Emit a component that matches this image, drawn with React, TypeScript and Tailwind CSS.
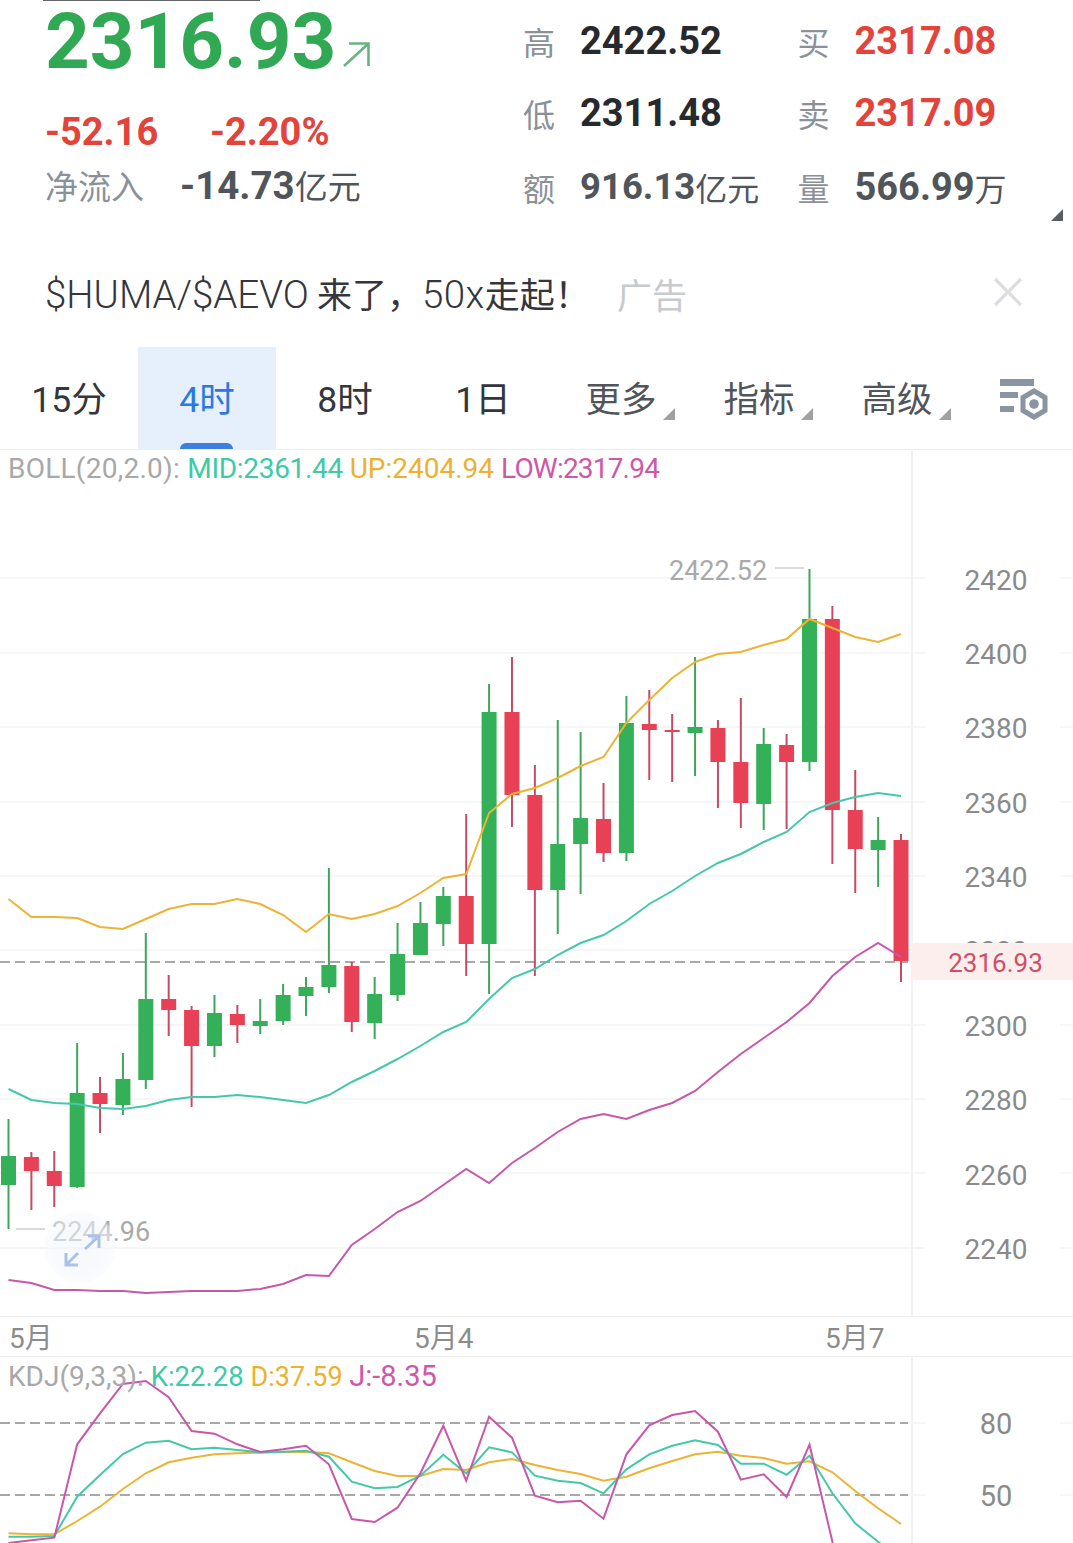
import React from "react";

const X0 = 8.5;
const STEP = 22.885;
const xi = (i: number) => X0 + STEP * i;

// [wickTop, bodyTop, bodyBottom, wickBottom, isGreen]
const candles: [number, number, number, number, boolean][] = [
  [1119, 1156, 1185, 1229, true],
  [1152, 1157, 1171, 1210, false],
  [1151, 1171, 1186, 1207, false],
  [1043, 1093, 1187, 1188, true],
  [1077, 1093, 1104, 1133, false],
  [1053, 1079, 1105, 1115, true],
  [933, 999, 1080, 1089, true],
  [975, 999, 1010, 1036, false],
  [1006, 1010, 1046, 1107, false],
  [995, 1013, 1046, 1057, true],
  [1005, 1014, 1025, 1043, false],
  [999, 1021, 1026, 1034, true],
  [984, 995, 1021, 1025, true],
  [977, 987, 996, 1016, true],
  [868, 965, 987, 993, true],
  [962, 966, 1022, 1032, false],
  [977, 994, 1023, 1039, true],
  [923, 954, 995, 1001, true],
  [902, 923, 955, 955, true],
  [887, 896, 924, 946, true],
  [814, 896, 944, 976, false],
  [684, 712, 944, 994, true],
  [657, 712, 795, 827, false],
  [765, 795, 890, 976, false],
  [720, 844, 890, 934, true],
  [732, 818, 844, 894, true],
  [783, 819, 853, 862, false],
  [696, 723, 853, 861, true],
  [690, 724, 730, 780, false],
  [714, 730, 732, 782, false],
  [657, 727, 733, 776, true],
  [720, 728, 762, 808, false],
  [698, 762, 803, 828, false],
  [728, 744, 804, 830, true],
  [734, 745, 762, 829, false],
  [569, 619, 762, 771, true],
  [606, 619, 810, 864, false],
  [770, 810, 849, 893, false],
  [817, 840, 850, 887, true],
  [834, 840, 961, 982, false],
];

const up = [899, 917, 917, 918, 927, 929, 919, 909, 904, 904, 899, 904, 915, 932, 914, 919, 914, 906, 893, 878, 874, 813, 794, 788, 778, 766, 757, 723, 700, 678, 662, 654, 652, 645, 639, 619, 628, 637, 642, 634];
const mid = [1089, 1100, 1103, 1104, 1108, 1109, 1106, 1100, 1097, 1097, 1095, 1097, 1100, 1103, 1095, 1082, 1071, 1059, 1046, 1032, 1022, 999, 978, 969, 955, 943, 935, 921, 904, 891, 876, 863, 854, 842, 832, 812, 803, 797, 793, 796];
const low = [1280, 1283, 1290, 1290, 1291, 1291, 1293, 1292, 1291, 1291, 1291, 1289, 1284, 1275, 1276, 1245, 1229, 1212, 1201, 1185, 1169, 1183, 1163, 1148, 1132, 1119, 1114, 1119, 1110, 1103, 1091, 1072, 1054, 1038, 1022, 1003, 976, 957, 943, 957];

const kv = [680, 680, 678, 560, 495, 432, 398, 392, 418, 413, 420, 427, 425, 422, 440, 515, 535, 531, 497, 434, 490, 412, 427, 497, 512, 519, 550, 478, 433, 407, 391, 405, 461, 461, 494, 437, 550, 640, 695, 750];
const dv = [670, 673, 673, 633, 590, 537, 490, 457, 443, 433, 430, 428, 426, 425, 430, 457, 483, 498, 498, 477, 480, 457, 447, 465, 480, 492, 512, 500, 475, 453, 433, 425, 437, 444, 461, 454, 487, 543, 595, 642];
const jv = [699, 691, 683, 403, 310, 222, 213, 262, 363, 371, 403, 426, 418, 407, 463, 627, 636, 593, 490, 347, 512, 320, 383, 557, 577, 572, 626, 433, 346, 315, 303, 365, 509, 493, 561, 404, 695, 900, 900, 900];

const line = (ys: number[]) => ys.map((y, i) => `${xi(i).toFixed(1)},${y}`).join(" ");
const kline = (vs: number[]) => vs.map((v, i) => `${xi(i).toFixed(1)},${(1310 + v / 3).toFixed(1)}`).join(" ");

const gridYs = [578, 653, 727, 802, 876, 950, 1025, 1099, 1173, 1248];
const axis = ["2420", "2400", "2380", "2360", "2340", "2320", "2300", "2280", "2260", "2240"];

const GREEN = "#34b158";
const RED = "#e84155";
const TEAL = "#45c8a9";
const YELLOW = "#ecb335";
const PINK = "#c957a9";

function Corner({ color }: { color: string }) {
  return (
    <svg width="12" height="12" viewBox="0 0 12 12" className="block">
      <polygon points="12,0 12,12 0,12" fill={color} />
    </svg>
  );
}

function Stat({ label, value, color, unit, size, last }: { label: string; value: string; color: string; unit?: string; size: string; last?: boolean }) {
  return (
    <div className={`flex items-center h-[72px] ${last ? "mt-[2px]" : ""}`}>
      <span className="w-[57px] text-[32px] text-[#8b9199] font-['Noto_Sans_CJK_SC',sans-serif]">{label}</span>
      <span className={`font-bold font-['Roboto',sans-serif] ${size} ${color}`}>{value}</span>
      {unit && <span className="text-[32px] text-[#50555c] font-['Noto_Sans_CJK_SC',sans-serif]">{unit}</span>}
    </div>
  );
}

function Tab({ label, active, more, dark }: { label: string; active?: boolean; more?: boolean; dark?: boolean }) {
  return (
    <div className={`relative w-[138px] flex items-center justify-center pt-[5px] ${active ? "bg-[#e5f0fc]" : ""}`}>
      <span className={`text-[35.5px] font-['Roboto','Noto_Sans_CJK_SC',sans-serif] ${active ? "text-[#2b78de]" : dark ? "text-[#50555c]" : "text-[#33363b]"}`}>{label}</span>
      {more && (
        <span className="absolute right-[15px] top-[61px]">
          <Corner color="#a0a0a0" />
        </span>
      )}
      {active && <span className="absolute bottom-0 left-[42px] w-[53px] h-[6px] rounded-t-[6px] bg-[#3e80e0]" />}
    </div>
  );
}

export default function App() {
  return (
    <div className="relative w-[1073px] h-[1543px] overflow-hidden bg-white">
      {/* Header */}
      <div className="h-[240px]">
        <div className="ml-[43px] w-[217px] h-[1px] bg-[#666]" />
        <div className="flex pl-[45px]">
          <div className="w-[478px]">
            <div className="flex h-[82px] items-center">
              <span className="text-[78px] leading-[82px] font-bold text-[#31a853] font-['Roboto',sans-serif]">2316.93</span>
              <svg width="28" height="27" viewBox="0 0 28 27" className="ml-[7px] mt-[25px]">
                <path d="M1 25 L25.5 2.5 M6 2.5 H25.5 V25" fill="none" stroke="#68b380" strokeWidth="2.6" />
              </svg>
            </div>
            <div className="flex items-center h-[62px] mt-[18px] text-[38px] font-bold text-[#e2433a] font-['Roboto',sans-serif]">
              <span className="w-[165px]">-52.16</span>
              <span>-2.20%</span>
            </div>
            <div className="flex items-center h-[48px] -mt-[1px]">
              <span className="w-[135px] text-[33px] text-[#8b9199] font-['Noto_Sans_CJK_SC',sans-serif]">净流入</span>
              <span className="text-[38.5px] font-bold text-[#50555c] font-['Roboto',sans-serif]">-14.73</span>
              <span className="text-[33px] text-[#50555c] font-['Noto_Sans_CJK_SC',sans-serif]">亿元</span>
            </div>
          </div>
          <div className="relative grid grid-cols-[274.5px_auto] content-start mt-[4px]">
            <Stat label="高" value="2422.52" color="text-[#26292e]" size="text-[38px]" />
            <Stat label="买" value="2317.08" color="text-[#e2433a]" size="text-[38px]" />
            <Stat label="低" value="2311.48" color="text-[#26292e]" size="text-[38px]" />
            <Stat label="卖" value="2317.09" color="text-[#e2433a]" size="text-[38px]" />
            <Stat label="额" value="916.13" color="text-[#50555c]" unit="亿元" size="text-[36.5px]" last />
            <Stat label="量" value="566.99" color="text-[#50555c]" unit="万" size="text-[38px]" last />
            <span className="absolute left-[528px] top-[204px]">
              <Corner color="#5a5e63" />
            </span>
          </div>
        </div>
      </div>

      {/* Ad row */}
      <div className="h-[107px] flex items-center pl-[45px] pr-[49px]">
        <span className="pt-[3px] whitespace-nowrap text-[#33363b] font-['Roboto','Noto_Sans_CJK_SC',sans-serif]">
          <span className="text-[38.5px] font-light">$HUMA/$AEVO</span>
          <span className="ml-[8px] text-[35px]">来了，</span>
          <span className="text-[38.5px] font-light tracking-[0.5px]">50x</span>
          <span className="text-[35px]">走起！</span>
        </span>
        <span className="ml-[27px] pt-[2px] text-[35px] text-[#c8cbce] font-['Noto_Sans_CJK_SC',sans-serif]">广告</span>
        <svg width="32" height="32" viewBox="0 0 32 32" className="ml-auto -mt-[4px]">
          <path d="M3 3 L29 29 M29 3 L3 29" stroke="#dcdde0" strokeWidth="3.2" fill="none" />
        </svg>
      </div>

      {/* Tabs */}
      <div className="h-[103px] flex border-b border-[#eeeeee]">
        <Tab label="15分" />
        <Tab label="4时" active />
        <Tab label="8时" />
        <Tab label="1日" />
        <Tab label="更多" more dark />
        <Tab label="指标" more dark />
        <Tab label="高级" more dark />
        <div className="flex-1 flex items-center justify-end pr-[24px] pt-[4px]">
          <svg width="50" height="44" viewBox="0 0 50 44">
            <rect x="1" y="1" width="34" height="7" fill="#8a94a3" />
            <rect x="1" y="14" width="18" height="6" fill="#8a94a3" />
            <rect x="1" y="28" width="14" height="6" fill="#8a94a3" />
            <polygon points="35,13 46,19.5 46,32.5 35,39 24,32.5 24,19.5" fill="none" stroke="#8a94a3" strokeWidth="5" />
            <circle cx="35" cy="26" r="4.8" fill="#8a94a3" />
          </svg>
        </div>
      </div>

      {/* Main chart */}
      <div className="relative h-[867px] flex border-b border-[#eeeeee] overflow-hidden">
        <svg className="absolute left-0 top-0" width="1073" height="867" viewBox="0 450 1073 867">
          {gridYs.map((y) => (
            <g key={y}>
              <line x1="0" x2="925" y1={y} y2={y} stroke="#f3f3f3" strokeWidth="1.5" />
              <line x1="1060" x2="1073" y1={y} y2={y} stroke="#f5f5f5" strokeWidth="1.5" />
            </g>
          ))}
          <line x1="912" x2="912" y1="450" y2="1317" stroke="#f1f1f1" strokeWidth="2" />
          <line x1="0" x2="908" y1="962" y2="962" stroke="#a8a8a8" strokeWidth="2" strokeDasharray="10 5" />
          {candles.map(([wt, bt, bb, wb, g], i) => {
            const x = xi(i);
            return (
              <g key={i}>
                <line x1={x} x2={x} y1={wt} y2={wb} stroke={g ? "#3ea55c" : "#c54a64"} strokeWidth="2" />
                <rect x={x - 7.5} y={bt} width="15" height={Math.max(bb - bt, 2)} fill={g ? GREEN : RED} />
              </g>
            );
          })}
          <polyline points={line(up)} fill="none" stroke={YELLOW} strokeWidth="2" />
          <polyline points={line(mid)} fill="none" stroke={TEAL} strokeWidth="2" />
          <polyline points={line(low)} fill="none" stroke={PINK} strokeWidth="2" />
          <line x1="775" x2="804" y1="568" y2="568" stroke="#cfcfcf" strokeWidth="1.5" />
          <line x1="16" x2="45" y1="1229" y2="1229" stroke="#cfcfcf" strokeWidth="1.5" />
        </svg>

        {/* plot column */}
        <div className="relative w-[912px]">
          <div className="h-[36px] pl-[8px] text-[28px] leading-[37px] whitespace-nowrap font-['Roboto','Noto_Sans_CJK_SC',sans-serif]">
            <span className="text-[#a8a8a8] tracking-[0.25px]">BOLL(20,2.0): </span>
            <span className="text-[#40c9a5] tracking-[-0.3px]">MID:2361.44 </span>
            <span className="text-[#edb12f]">UP:2404.94 </span>
            <span className="text-[#cd57ab] tracking-[-0.8px]">LOW:2317.94</span>
          </div>
          <span className="absolute left-[669px] top-[103px] text-[27px] leading-[36px] text-[#a9a9a9] font-['Roboto',sans-serif]">2422.52</span>
          <span className="absolute left-[52px] top-[764px] text-[27px] leading-[36px] text-[#a9a9a9] font-['Roboto',sans-serif]">2244.96</span>
          <div className="absolute left-[44px] top-[761px] w-[72px] h-[72px] rounded-full bg-[radial-gradient(circle,#edf3fb90_0%,#f3f7fc90_55%,#ffffff00_100%)] flex items-center justify-center">
            <svg width="40" height="40" viewBox="0 0 40 40" className="overflow-visible">
              <path d="M25 22 L39 9 M28 9 H39 V21" fill="none" stroke="#a9c2ea" strokeWidth="3" />
              <path d="M6 38 L18 26 M6 26 V38 H18" fill="none" stroke="#a9c2ea" strokeWidth="3" />
            </svg>
          </div>
        </div>

        {/* axis column */}
        <div className="relative flex-1 flex flex-col items-center pt-[93.5px] pl-[7px]">
          {axis.map((a) => (
            <span key={a} className="h-[74.4px] leading-[74.4px] text-[28px] text-[#8a8a8a] font-['Roboto',sans-serif]">{a}</span>
          ))}
          <div className="absolute left-0 right-0 top-[493px] h-[37px] bg-[#fdeeee] flex items-center justify-center pt-[3px] pl-[6px]">
            <span className="text-[26px] text-[#cf4f66] font-['Roboto',sans-serif]">2316.93</span>
          </div>
        </div>
      </div>

      {/* x axis */}
      <div className="h-[40px] grid grid-cols-[405px_411px_auto] pt-[1px] pl-[9px] items-center text-[28px] text-[#8c8c8c] border-b border-[#eeeeee] font-['Roboto','Noto_Sans_CJK_SC',sans-serif]">
        <span>5月</span>
        <span>5月4</span>
        <span>5月7</span>
      </div>

      {/* KDJ */}
      <div className="relative h-[186px] flex overflow-hidden">
        <svg className="absolute left-0 top-0" width="1073" height="186" viewBox="0 1357 1073 186">
          <line x1="912" x2="912" y1="1357" y2="1543" stroke="#f1f1f1" strokeWidth="2" />
          <line x1="0" x2="908" y1="1423" y2="1423" stroke="#a8a8a8" strokeWidth="2" strokeDasharray="10 5" />
          <line x1="0" x2="908" y1="1495" y2="1495" stroke="#a8a8a8" strokeWidth="2" strokeDasharray="10 5" />
          <line x1="908" x2="925" y1="1423" y2="1423" stroke="#f3f3f3" strokeWidth="1.5" />
          <line x1="908" x2="925" y1="1495" y2="1495" stroke="#f3f3f3" strokeWidth="1.5" />
          <line x1="1060" x2="1073" y1="1423" y2="1423" stroke="#f5f5f5" strokeWidth="1.5" />
          <line x1="1060" x2="1073" y1="1495" y2="1495" stroke="#f5f5f5" strokeWidth="1.5" />
          <polyline points={kline(dv)} fill="none" stroke={YELLOW} strokeWidth="2" />
          <polyline points={kline(kv)} fill="none" stroke={TEAL} strokeWidth="2" />
          <polyline points={kline(jv)} fill="none" stroke={PINK} strokeWidth="2" />
        </svg>
        <div className="relative w-[912px]">
          <div className="h-[38px] pl-[8px] leading-[39px] whitespace-nowrap font-['Roboto',sans-serif]">
            <span className="text-[28px] text-[#a8a8a8]">KDJ(9,3,3): </span>
            <span className="text-[27.5px] text-[#40c9a5]">K:22.28 </span>
            <span className="text-[27px] text-[#edb12f]">D:37.59 </span>
            <span className="text-[29px] text-[#cd57ab]">J:-8.35</span>
          </div>
        </div>
        <div className="relative flex-1 flex flex-col items-center pt-[31px] pl-[7px]">
          <span className="h-[72px] leading-[72px] text-[29px] text-[#8a8a8a] font-['Roboto',sans-serif]">80</span>
          <span className="h-[72px] leading-[72px] text-[29px] text-[#8a8a8a] font-['Roboto',sans-serif]">50</span>
        </div>
      </div>
    </div>
  );
}
